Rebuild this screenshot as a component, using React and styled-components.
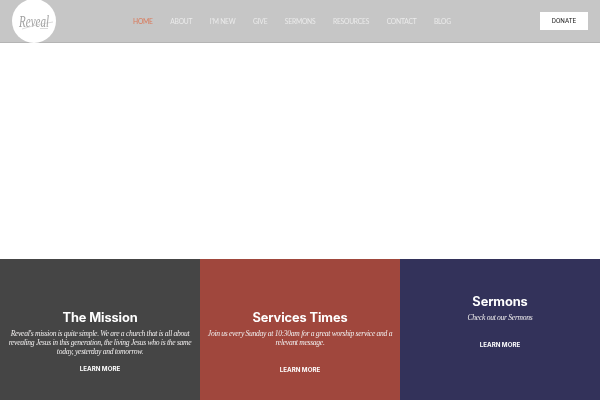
import styled, { createGlobalStyle } from "styled-components";

const GlobalStyle = createGlobalStyle`
  html, body {
    margin: 0;
    padding: 0;
    background: #fff;
  }
  body {
    font-family: "Inter", "Liberation Sans", sans-serif;
  }
`;

const Page = styled.div`
  width: 600px;
  height: 400px;
  display: flex;
  flex-direction: column;
  overflow: hidden;
`;

const Header = styled.header`
  height: 42px;
  flex: none;
  display: flex;
  align-items: center;
  background: #c6c6c6;
  border-bottom: 1px solid #b4b4b4;
  padding: 0 12px;
`;

const Logo = styled.div`
  width: 44px;
  height: 44px;
  flex: none;
  border-radius: 50%;
  background: #fff;
  display: flex;
  align-items: center;
  justify-content: center;

  svg {
    transform: translateZ(0);
  }
`;

const Nav = styled.nav`
  display: flex;
  align-items: center;
  gap: 17.5px;
  margin-left: 77px;
  flex: 1;
`;

const NavLink = styled.a`
  font-family: "Lato", "Liberation Sans", sans-serif;
  font-size: 6.7px;
  font-weight: 400;
  letter-spacing: -0.2px;
  color: ${({ $active }) => ($active ? "#d9795a" : "#ebebeb")};
  text-transform: uppercase;
  transform: translateZ(0);
`;

const Donate = styled.a`
  width: 48px;
  height: 18px;
  flex: none;
  display: flex;
  align-items: center;
  justify-content: center;
  background: #fff;
`;

const DonateLabel = styled.span`
  color: #222;
  font-family: "Roboto", "Liberation Sans", sans-serif;
  font-size: 6.4px;
  text-transform: uppercase;
  transform: translateZ(0);
`;

const Hero = styled.div`
  flex: 1;
  background: #fff;
`;

const Cards = styled.section`
  height: 141px;
  flex: none;
  display: grid;
  grid-template-columns: 200px 200px 200px;
`;

const Card = styled.article`
  background: ${({ $bg }) => $bg};
  padding: ${({ $top }) => $top}px 6px 0;
  display: flex;
  flex-direction: column;
  align-items: center;
  text-align: center;
  color: #fff;
`;

const Title = styled.h2`
  margin: 0;
  font-family: "Inter", "Liberation Sans", sans-serif;
  font-size: 12.8px;
  line-height: 18px;
  font-weight: 700;
  letter-spacing: -0.1px;
  transform: translateZ(0);
`;

const Text = styled.p`
  margin: 2px 0 0;
  font-family: "Liberation Serif", serif;
  font-style: italic;
  font-size: 7.6px;
  line-height: 9px;
  letter-spacing: -0.3px;
  color: #f0eeee;
  transform: translateZ(0);
`;

const More = styled.a`
  margin-top: ${({ $gap }) => $gap}px;
  font-family: "Inter", "Liberation Sans", sans-serif;
  font-size: 6.2px;
  font-weight: 700;
  line-height: 8px;
  text-transform: uppercase;
  transform: translateZ(0);
`;

const links = ["Home", "About", "I'm New", "Give", "Sermons", "Resources", "Contact", "Blog"];

const cards = [
  {
    title: "The Mission",
    text: "Reveal's mission is quite simple. We are a church that is all about revealing Jesus in this generation, the living Jesus who is the same today, yesterday and tomorrow.",
    bg: "#454545",
    top: 50,
    gap: 9,
  },
  {
    title: "Services Times",
    text: "Join us every Sunday at 10:30am for a great worship service and a relevant message.",
    bg: "#a0473d",
    top: 50,
    gap: 19,
  },
  {
    title: "Sermons",
    text: "Check out our Sermons",
    bg: "#33325a",
    top: 34,
    gap: 19,
  },
];

const App = () => {
  return (
    <Page>
      <GlobalStyle />
      <Header>
        <Logo>
          <svg width="44" height="44" viewBox="0 0 44 44">
            <text
              transform="translate(22 28) scale(1 1.5)"
              textAnchor="middle"
              fontFamily="Liberation Serif, serif"
              fontStyle="italic"
              fontSize="11"
              fill="#a2a2a2"
            >
              Reveal
            </text>
            <path d="M10 30 Q24 25 41 23" fill="none" stroke="#b4b4b4" strokeWidth="0.5" />
            <path d="M28 29.5 H36" fill="none" stroke="#d0d0d0" strokeWidth="0.8" />
          </svg>
        </Logo>
        <Nav>
          {links.map((link, i) => (
            <NavLink key={link} $active={i === 0}>
              {link}
            </NavLink>
          ))}
        </Nav>
        <Donate>
          <DonateLabel>Donate</DonateLabel>
        </Donate>
      </Header>
      <Hero />
      <Cards>
        {cards.map((card) => (
          <Card key={card.title} $bg={card.bg} $top={card.top}>
            <Title>{card.title}</Title>
            <Text>{card.text}</Text>
            <More $gap={card.gap}>Learn More</More>
          </Card>
        ))}
      </Cards>
    </Page>
  );
};

export default App;
